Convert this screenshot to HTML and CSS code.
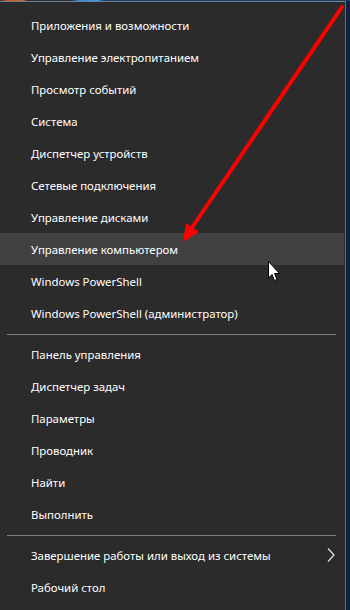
FILE: index.html
```html
<!DOCTYPE html>
<html lang="ru">
<head>
    <meta charset="UTF-8">
    <meta name="viewport" content="width=device-width, initial-scale=1.0">
    <title>Меню Win+X</title>
    <link rel="stylesheet" href="styles.css">
</head>
<body>
    <div class="wallpaper"></div>
    <div class="menu">
        <div class="group">
            <div class="item">Приложения и возможности</div>
            <div class="item">Управление электропитанием</div>
            <div class="item">Просмотр событий</div>
            <div class="item">Система</div>
            <div class="item">Диспетчер устройств</div>
            <div class="item">Сетевые подключения</div>
            <div class="item">Управление дисками</div>
            <div class="item active">Управление компьютером</div>
            <div class="item">Windows PowerShell</div>
            <div class="item">Windows PowerShell (администратор)</div>
        </div>
        <div class="separator"></div>
        <div class="group">
            <div class="item">Панель управления</div>
            <div class="item">Диспетчер задач</div>
            <div class="item">Параметры</div>
            <div class="item">Проводник</div>
            <div class="item">Найти</div>
            <div class="item">Выполнить</div>
        </div>
        <div class="separator"></div>
        <div class="group">
            <div class="item submenu">
                <span>Завершение работы или выход из системы</span>
                <svg class="chevron" width="8" height="14" viewBox="0 0 8 14">
                    <polyline points="1,0.5 7,7 1,13.5" fill="none" stroke="#e8e8e8" stroke-width="1.2"/>
                </svg>
            </div>
            <div class="item">Рабочий стол</div>
        </div>
    </div>

    <!-- annotation arrow and mouse pointer over the menu -->
    <svg class="overlay" width="350" height="610" viewBox="0 0 350 610">
        <line x1="342" y1="7" x2="191" y2="229" stroke="#ff0000" stroke-width="4" stroke-linecap="round"/>
        <polygon points="183,242 186,223 199,232" fill="#ff0000"/>
        <path d="M268.5 261.5 L268.5 278 L272 274.5 L274.5 280.5 L277 279.5 L274.5 273.5 L279.5 273.5 Z" fill="#ffffff" stroke="#000000" stroke-width="1" stroke-linejoin="round"/>
    </svg>
</body>
</html>
```

FILE: styles.css
```css
body {
    margin: 0;
    width: 350px;
    height: 610px;
    overflow: hidden;
    background-color: #0b2440;
    font-family: "Noto Sans", "Open Sans", sans-serif;
    font-size: 11.4px;
    color: #ffffff;
}
.wallpaper {
    height: 1px;
    background: linear-gradient(to right, #2b2b2b 0, #c4541c 6px, #d8691e 22px, #2b2b2b 28px, #2b2b2b 72px, #2a8ad8 78px, #3aa0e8 98px, #1c3f66 104px, #1c3f66 100%);
}
.menu {
    width: 346px;
    height: 609px;
    box-sizing: border-box;
    background-color: #2b2b2b;
    border-top: 1px solid #6d8096;
    border-right: 1px solid #5a6e86;
    padding-top: 7px;
}
.item {
    height: 32px;
    display: flex;
    align-items: center;
    padding-left: 31px;
    margin-right: 1px;
}
.item.active {
    background-color: #414141;
}
.submenu {
    justify-content: space-between;
    padding-right: 9px;
}
.chevron {
    display: block;
}
.separator {
    height: 1px;
    background-color: #7f7f7f;
    margin: 5px 9px 3px 7px;
}
.overlay {
    position: absolute;
    left: 0;
    top: 0;
}
```
